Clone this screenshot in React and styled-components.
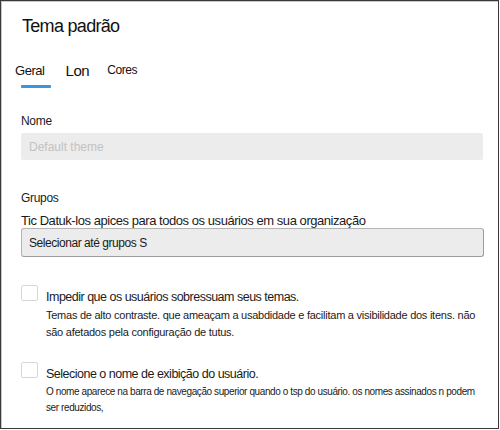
import React, { useState } from "react";
import styled, { createGlobalStyle } from "styled-components";

const GlobalStyle = createGlobalStyle`
    html, body {
        margin: 0;
        padding: 0;
        background: #ffffff;
    }
    body {
        font-family: "Liberation Sans", Arial, sans-serif;
        color: #1b1b1b;
    }
`;

const tabs = [
    { label: "Geral", size: 13, after: 21 },
    { label: "Lon", size: 15, after: 18 },
    { label: "Cores", size: 12, after: 0 },
];

const options = [
    {
        title: "Impedir que os usuários sobressuam seus temas.",
        text: "Temas de alto contraste. que ameaçam a usabdidade e facilitam a visibilidade dos itens. não são afetados pela configuração de tutus.",
        small: false,
    },
    {
        title: "Selecione o nome de exibição do usuário.",
        text: "O nome aparece na barra de navegação superior quando o tsp do usuário. os nomes assinados n podem ser reduzidos,",
        small: true,
    },
];

const App = () => {
    const [active, setActive] = useState(0);
    const [checked, setChecked] = useState([false, false]);

    const toggle = (i) => {
        const next = [...checked];
        next[i] = !next[i];
        setChecked(next);
    };

    return (
        <>
            <GlobalStyle />
            <Panel>
                <Title>Tema padrão</Title>
                <TabBar>
                    {tabs.map((t, i) => (
                        <Tab
                            key={t.label}
                            size={t.size}
                            after={t.after}
                            active={i === active}
                            onClick={() => setActive(i)}
                        >
                            {t.label}
                        </Tab>
                    ))}
                </TabBar>

                <Field top={33}>
                    <Label>Nome</Label>
                    <Input placeholder="Default theme" disabled />
                </Field>

                <Field top={31}>
                    <Label>Grupos</Label>
                    <Hint>Tic Datuk-los apices para todos os usuários em sua organização</Hint>
                    <Select>Selecionar até grupos S</Select>
                </Field>

                <OptionList>
                    {options.map((o, i) => (
                        <Option key={o.title}>
                            <Box checked={checked[i]} onClick={() => toggle(i)} />
                            <OptionBody>
                                <OptionTitle>{o.title}</OptionTitle>
                                <OptionText small={o.small}>{o.text}</OptionText>
                            </OptionBody>
                        </Option>
                    ))}
                </OptionList>
            </Panel>
        </>
    );
};

const Panel = styled.div`
    box-sizing: border-box;
    width: 499px;
    height: 429px;
    border: 1px solid #3a3a3a;
    box-shadow: inset 1px 1px 0 #c8c8c8;
    padding: 13px 16px 0 20px;
    display: flex;
    flex-direction: column;
    overflow: hidden;
`;

const Title = styled.h1`
    margin: 0 0 0 1px;
    font-size: 18px;
    font-weight: 400;
    line-height: 24px;
    letter-spacing: -0.7px;
    color: #111;
`;

const TabBar = styled.div`
    display: flex;
    align-items: center;
    margin: 21px 0 0 -6px;
    height: 22px;
`;

const Tab = styled.div`
    position: relative;
    margin-right: ${(p) => p.after}px;
    font-size: ${(p) => p.size}px;
    letter-spacing: -0.45px;
    color: #111;
    cursor: pointer;
    &:after {
        content: "";
        position: absolute;
        left: 6px;
        width: 30px;
        bottom: -10px;
        height: 3px;
        border-radius: 1px;
        background: ${(p) => (p.active ? "#3a96dd" : "transparent")};
    }
`;

const Field = styled.div`
    display: flex;
    flex-direction: column;
    margin-top: ${(p) => p.top}px;
`;

const Label = styled.div`
    font-size: 12px;
    line-height: 15px;
    letter-spacing: -0.3px;
    color: #1b1b1b;
    margin-bottom: 4px;
`;

const Hint = styled.div`
    font-size: 13px;
    line-height: 16px;
    letter-spacing: -0.45px;
    color: #1b1b1b;
    margin: 3px 0 -1px;
`;

const Input = styled.input`
    box-sizing: border-box;
    width: 462px;
    height: 27px;
    border: none;
    border-radius: 2px;
    background: #ececec;
    padding: 0 8px;
    font-family: inherit;
    font-size: 12px;
    &::placeholder {
        color: #c2c2c2;
    }
`;

const Select = styled.div`
    box-sizing: border-box;
    width: 463px;
    height: 29px;
    display: flex;
    align-items: center;
    padding: 0 7px;
    border: 1px solid #b4b4b4;
    border-right-color: #9c9c9c;
    border-bottom-color: #9c9c9c;
    border-radius: 3px;
    background: #ececec;
    font-size: 12px;
    letter-spacing: -0.45px;
    color: #1b1b1b;
`;

const OptionList = styled.div`
    display: flex;
    flex-direction: column;
    gap: 21px;
    margin-top: 28px;
`;

const Option = styled.div`
    display: flex;
    align-items: flex-start;
    gap: 8px;
`;

const Box = styled.div`
    box-sizing: border-box;
    flex: none;
    width: 17px;
    height: 16px;
    border: 1px solid #d6d6d6;
    border-radius: 2px;
    background: ${(p) => (p.checked ? "#3a96dd" : "#fff")};
    cursor: pointer;
`;

const OptionBody = styled.div`
    display: flex;
    flex-direction: column;
    gap: 1px;
`;

const OptionTitle = styled.div`
    font-size: 12.5px;
    line-height: 17px;
    letter-spacing: -0.5px;
    margin-top: 4px;
    color: #1b1b1b;
`;

const OptionText = styled.div`
    width: ${(p) => (p.small ? 432 : 440)}px;
    font-size: ${(p) => (p.small ? 10 : 11)}px;
    line-height: ${(p) => (p.small ? 16 : 17)}px;
    letter-spacing: ${(p) => (p.small ? -0.4 : -0.25)}px;
    color: #1b1b1b;
`;

export default App;
